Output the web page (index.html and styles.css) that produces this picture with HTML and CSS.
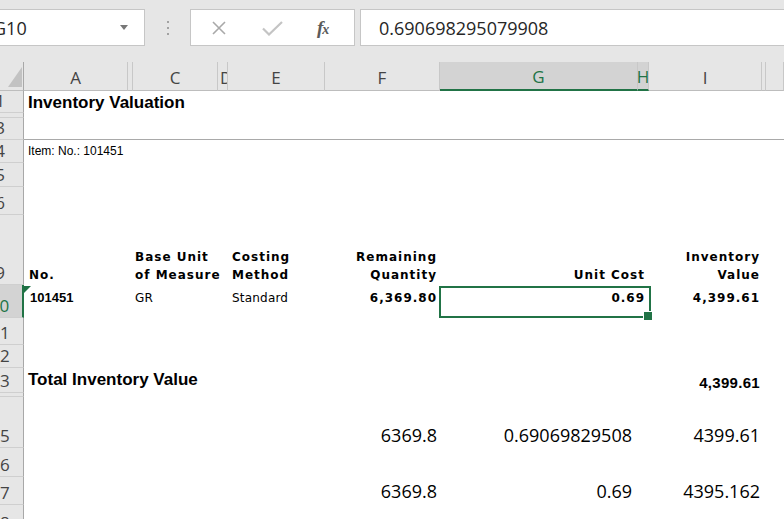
FILE: index.html
```html
<!DOCTYPE html>
<html lang="en">
<head>
<meta charset="utf-8">
<title>Inventory Valuation</title>
<link rel="stylesheet" href="styles.css">
</head>
<body>
<div class="fbar">
  <div class="namebox"><span class="ref">G10</span><span class="caret"></span></div>
  <div class="grip"><i></i><i></i><i></i></div>
  <div class="fbtns">
    <svg class="ic-x" width="14" height="14" viewBox="0 0 14 14"><path d="M1 1L13 13M13 1L1 13" fill="none" stroke="#a9a9a9" stroke-width="1.6"/></svg>
    <svg class="ic-ok" width="21" height="15" viewBox="0 0 21 15"><path d="M1 7.5L7 13.5L20 1" fill="none" stroke="#c4c4c4" stroke-width="2.2"/></svg>
    <span class="fx">f<small>x</small></span>
  </div>
  <div class="finput">0.690698295079908</div>
</div>

<div class="sheet">
  <div class="row colhdr">
    <div class="corner"><span class="tri"></span></div>
    <div>A</div><div></div><div>C</div><div class="narrow">D</div><div>E</div><div>F</div>
    <div class="sel">G</div><div class="sel">H</div><div>I</div><div></div><div></div>
  </div>

  <div class="row h22"><div class="rh">1</div><div class="c title span-all">Inventory Valuation</div></div>
  <div class="row h5"><div class="rh"></div></div>
  <div class="row h22"><div class="rh">3</div><div class="c rule span-all"></div></div>
  <div class="row h23"><div class="rh">4</div><div class="c item span-all">Item: No.: 101451</div></div>
  <div class="row h24"><div class="rh">5</div></div>
  <div class="row h28"><div class="rh">6</div></div>
  <div class="row h70">
    <div class="rh">9</div>
    <div class="c hd col-a">No.</div>
    <div class="c hd col-c">Base Unit<br>of Measure</div>
    <div class="c hd col-e">Costing<br>Method</div>
    <div class="c hd num col-f">Remaining<br>Quantity</div>
    <div class="c hd num col-gh">Unit Cost</div>
    <div class="c hd num col-i">Inventory<br>Value</div>
  </div>
  <div class="row h33">
    <div class="rh on">10</div>
    <div class="c dt col-a flag"><b class="id">101451</b></div>
    <div class="c dt reg col-c">GR</div>
    <div class="c dt reg col-e">Standard</div>
    <div class="c dt num col-f">6,369.80</div>
    <div class="c dt num col-gh active">0.69</div>
    <div class="c dt num col-i">4,399.61</div>
  </div>
  <div class="row h27"><div class="rh">11</div></div>
  <div class="row h23"><div class="rh">12</div></div>
  <div class="row h25">
    <div class="rh">13</div>
    <div class="c total col-total">Total Inventory Value</div>
    <div class="c tnum num col-i">4,399.61</div>
  </div>
  <div class="row h4"><div class="rh"></div></div>
  <div class="row h51">
    <div class="rh">15</div>
    <div class="c cal num col-f">6369.8</div>
    <div class="c cal num col-g">0.69069829508</div>
    <div class="c cal num col-i">4399.61</div>
  </div>
  <div class="row h29"><div class="rh">16</div></div>
  <div class="row h28">
    <div class="rh">17</div>
    <div class="c cal low num col-f">6369.8</div>
    <div class="c cal low num col-g">0.69</div>
    <div class="c cal low num col-i">4395.162</div>
  </div>
  <div class="row h30"><div class="rh">18</div></div>
</div>
</body>
</html>
```

FILE: styles.css
```css
* { box-sizing: border-box; }
html, body { margin: 0; padding: 0; }
body {
  width: 784px;
  height: 519px;
  overflow: hidden;
  background: #fff;
  font-family: "Liberation Sans", Arial, sans-serif;
}

/* ---------- formula bar ---------- */
.fbar {
  display: flex;
  align-items: flex-start;
  height: 62px;
  padding-top: 9px;
  background: #e6e6e6;
}
.namebox {
  width: 146px;
  height: 37px;
  margin-left: -1px;
  background: #fff;
  border: 1px solid #c6c6c6;
  display: flex;
  align-items: center;
  justify-content: space-between;
  overflow: hidden;
  font: 18px "Open Sans", sans-serif;
  color: #262626;
}
.namebox .ref { margin-left: -7px; }
.caret {
  width: 0; height: 0;
  border-left: 4.5px solid transparent;
  border-right: 4.5px solid transparent;
  border-top: 5px solid #777;
  margin-right: 16px;
}
.grip {
  width: 45px;
  height: 37px;
  display: flex;
  flex-direction: column;
  align-items: center;
  gap: 4px;
  padding-top: 12px;
}
.grip i { display: block; width: 2px; height: 2px; background: #a2a2a2; }
.fbtns {
  width: 165px;
  height: 37px;
  background: #fff;
  border: 1px solid #c6c6c6;
  display: flex;
  align-items: center;
  padding-left: 21px;
}
.ic-ok { margin-left: 36px; margin-top: 1px; }
.fx {
  margin-left: 34px;
  font: italic bold 19px "Liberation Serif", serif;
  color: #5b5b5b;
  letter-spacing: -1px;
}
.fx small { font-size: 14px; }
.finput {
  flex: 1;
  height: 37px;
  margin-left: 5px;
  margin-right: -2px;
  background: #fff;
  border: 1px solid #c6c6c6;
  padding-left: 18px;
  display: flex;
  align-items: center;
  font: 18px "Open Sans", sans-serif;
  color: #262626;
}

/* ---------- sheet grid ---------- */
.row {
  display: grid;
  grid-template-columns: 47px 104px 5px 85px 10px 97px 115px 198px 11px 113px 4px 1fr;
  margin-left: -23px;
}
.colhdr { height: 29px; background: #e6e6e6; }
.colhdr > div {
  border-right: 1px solid #c8c8c8;
  border-bottom: 1px solid #bdbdbd;
  display: flex;
  align-items: flex-end;
  justify-content: center;
  padding-bottom: 1px;
  font: 17px/23px "Open Sans", sans-serif;
  color: #444;
  overflow: hidden;
  white-space: nowrap;
}
.colhdr > .narrow { justify-content: flex-start; padding-left: 2px; }
.colhdr > .corner {
  justify-content: flex-end;
  padding: 0 1px 3px 0;
  border-right-color: #a8a8a8;
}
.tri {
  width: 0; height: 0;
  border-style: solid;
  border-width: 0 0 20px 14px;
  border-color: transparent transparent #c2c2c2 transparent;
}
.colhdr > .sel {
  background: #d3d3d3;
  color: #217346;
  border-bottom: 2px solid #217346;
}

.h4 { height: 4px; } .h5 { height: 5px; }
.h22 { height: 22px; } .h23 { height: 23px; } .h24 { height: 24px; }
.h25 { height: 25px; } .h27 { height: 27px; } .h28 { height: 28px; }
.h29 { height: 29px; } .h30 { height: 30px; } .h33 { height: 33px; }
.h51 { height: 51px; } .h70 { height: 70px; }

.rh {
  grid-column: 1;
  background: #e6e6e6;
  border-right: 1px solid #a8a8a8;
  border-bottom: 1px solid #cfcfcf;
  display: flex;
  align-items: flex-end;
  justify-content: center;
  padding-bottom: 1px;
  font: 17px/20px "Open Sans", sans-serif;
  color: #444;
  overflow: hidden;
  white-space: nowrap;
}
.rh.on {
  background: #d3d3d3;
  color: #217346;
  border-right: 2px solid #217346;
}

.c {
  display: flex;
  white-space: nowrap;
  min-width: 0;
  color: #000;
}
.span-all { grid-column: 2 / -1; }
.col-a { grid-column: 2; padding-left: 5px; }
.col-c { grid-column: 4 / span 2; padding-left: 2px; }
.col-e { grid-column: 6; padding-left: 4px; }
.col-f { grid-column: 7; padding-right: 3px; }
.col-gh { grid-column: 8 / span 2; padding-right: 4px; }
.col-g { grid-column: 8; padding-right: 6px; }
.col-i { grid-column: 10; padding-right: 2px; }
.col-total { grid-column: 2 / span 6; padding-left: 4px; }
.num { justify-content: flex-end; text-align: right; }

.title {
  align-items: flex-end;
  padding-left: 4px;
  font: bold 17px "Liberation Sans", Arial, sans-serif;
}
.rule { border-bottom: 1px solid #a9a9a9; }
.item {
  align-items: flex-start;
  padding: 4px 0 0 4px;
  font: 12px/14px "Liberation Sans", Arial, sans-serif;
}

.hd {
  align-items: flex-end;
  padding-bottom: 1px;
  font: bold 12px/18px "DejaVu Sans", sans-serif;
  letter-spacing: 1px;
}

.dt {
  align-items: flex-start;
  padding-top: 5px;
  font: bold 12px/16px "DejaVu Sans", sans-serif;
  letter-spacing: 1px;
}
.dt.reg { font-weight: normal; letter-spacing: 0.2px; }
.id { font: bold 13px/16px "Liberation Sans", Arial, sans-serif; letter-spacing: 0; }
.flag { position: relative; padding-left: 6px; }
.flag::before {
  content: "";
  position: absolute;
  left: 0; top: 1px;
  border-style: solid;
  border-width: 7px 7px 0 0;
  border-color: #1e7145 transparent transparent transparent;
}
.active { position: relative; }
.active::before {
  content: "";
  position: absolute;
  left: -1px; right: -2px; top: 1px; bottom: 0;
  border: 2px solid #217346;
}
.active::after {
  content: "";
  position: absolute;
  right: -4px; bottom: -3px;
  width: 8px; height: 8px;
  background: #217346;
  border: 1px solid #fff;
}

.total {
  align-items: flex-end;
  padding-bottom: 3px;
  font: bold 17px "Liberation Sans", Arial, sans-serif;
}
.tnum {
  align-items: flex-end;
  padding-bottom: 2px;
  font: bold 15px "Liberation Sans", Arial, sans-serif;
  letter-spacing: 0.3px;
}

.cal {
  align-items: flex-end;
  padding-bottom: 1px;
  font: 18px "Open Sans", sans-serif;
  color: #000;
}
.cal.low { padding-bottom: 2px; }
```
